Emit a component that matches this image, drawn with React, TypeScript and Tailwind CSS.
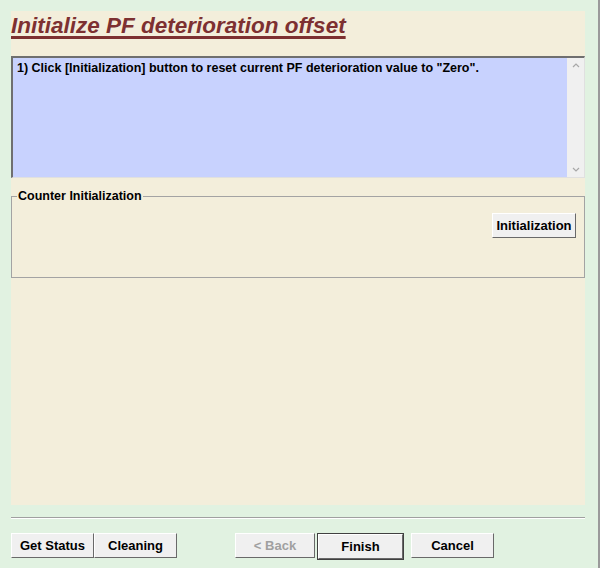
import React from "react";

const font = { fontFamily: '"Liberation Sans", Arial, sans-serif' };

function Btn({ children, w, disabled }: { children: React.ReactNode; w: string; disabled?: boolean }) {
  return (
    <div
      className={`${w} h-[25px] flex items-center justify-center text-[13px] font-bold bg-[#f0f0f0] border border-t-[#ffffff] border-l-[#ffffff] border-r-[#696969] border-b-[#696969] ${disabled ? "text-[#a0a0a0]" : "text-[#000000]"}`}
    >
      {children}
    </div>
  );
}

export default function App() {
  return (
    <div className="w-[600px] h-[568px] bg-[#e1f2e1] relative overflow-hidden border-r-2 border-r-[#9a9a9a]" style={font}>
      <div className="ml-[11px] mr-[13px] mt-[11px] h-[494px] bg-[#f3eedb] flex flex-col">
        <div className="h-[45px] pt-[2px]">
          <span className="text-[22.5px] font-bold italic text-[#7d3031] underline decoration-[2.5px] underline-offset-[3px] leading-[26px]">
            Initialize PF deterioration offset
          </span>
        </div>
        <div className="h-[122px] bg-[#c8d2fe] border-t-2 border-l-2 border-[#6f6f6f] border-r border-b border-r-[#e0e0e0] border-b-[#e0e0e0] flex">
          <div className="flex-1 pl-[4px] pt-[3px] text-[12.5px] font-bold text-[#000] leading-[15px]">
            1) Click [Initialization] button to reset current PF deterioration value to "Zero".
          </div>
          <div className="w-[17px] bg-[#f0f0f0] flex flex-col justify-between items-center py-[4px] text-[#b0b0b0]">
            <svg width="8" height="6" viewBox="0 0 8 6"><path d="M1 5 L4 2 L7 5" stroke="#a8a8a8" strokeWidth="1.2" fill="none" /></svg>
            <svg width="8" height="6" viewBox="0 0 8 6"><path d="M1 1 L4 4 L7 1" stroke="#a8a8a8" strokeWidth="1.2" fill="none" /></svg>
          </div>
        </div>
        <div className="mt-[18px] h-[82px] border border-[#a3a3a3] relative">
          <div className="absolute left-[5px] -top-[8px] bg-[#f3eedb] px-[1px] text-[12.5px] font-bold leading-[15px]">
            Counter Initialization
          </div>
          <div className="flex justify-end pr-[8px] pt-[16px]">
            <Btn w="w-[84px]">Initialization</Btn>
          </div>
        </div>
      </div>
      <div className="ml-[11px] mr-[13px] mt-[12px] h-[2px] border-t border-[#a0a0a0] border-b border-b-[#ffffff]" />
      <div className="ml-[11px] mt-[14px] flex">
        <Btn w="w-[83px]">Get Status</Btn>
        <Btn w="w-[83px]">Cleaning</Btn>
        <div className="w-[58px]" />
        <Btn w="w-[80px]" disabled>&lt; Back</Btn>
        <div className="w-[2px]" />
        <div className="border border-[#404040]">
          <Btn w="w-[85px]">Finish</Btn>
        </div>
        <div className="w-[7px]" />
        <Btn w="w-[83px]">Cancel</Btn>
      </div>
    </div>
  );
}
